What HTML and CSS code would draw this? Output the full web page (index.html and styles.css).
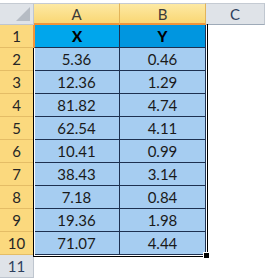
FILE: index.html
```html
<!DOCTYPE html>
<html>
<head>
<meta charset="utf-8">
<link rel="stylesheet" href="styles.css">
</head>
<body>
<div class="sheet">
  <div class="grid">
    <div class="corner"><span class="tri"></span></div>
    <div class="colh sel">A</div>
    <div class="colh sel">B</div>
    <div class="colh">C</div>

    <div class="rowh sel">1</div><div class="cell head a">X</div><div class="cell head b">Y</div><div class="empty"></div>
    <div class="rowh sel">2</div><div class="cell">5.36</div><div class="cell">0.46</div><div class="empty"></div>
    <div class="rowh sel">3</div><div class="cell">12.36</div><div class="cell">1.29</div><div class="empty"></div>
    <div class="rowh sel">4</div><div class="cell">81.82</div><div class="cell">4.74</div><div class="empty"></div>
    <div class="rowh sel">5</div><div class="cell">62.54</div><div class="cell">4.11</div><div class="empty"></div>
    <div class="rowh sel">6</div><div class="cell">10.41</div><div class="cell">0.99</div><div class="empty"></div>
    <div class="rowh sel">7</div><div class="cell">38.43</div><div class="cell">3.14</div><div class="empty"></div>
    <div class="rowh sel">8</div><div class="cell">7.18</div><div class="cell">0.84</div><div class="empty"></div>
    <div class="rowh sel">9</div><div class="cell">19.36</div><div class="cell">1.98</div><div class="empty"></div>
    <div class="rowh sel">10</div><div class="cell">71.07</div><div class="cell">4.44</div><div class="empty"></div>
    <div class="rowh">11</div><div class="empty"></div><div class="empty"></div><div class="empty"></div>
  </div>
  <div class="selection"><span class="handle"></span></div>
</div>
</body>
</html>
```
FILE: styles.css
```css
html, body {
  margin: 0;
  padding: 0;
  background: #ffffff;
}
.sheet {
  position: relative;
  width: 265px;
  height: 280px;
  overflow: hidden;
  padding-top: 3px;
  box-sizing: border-box;
  font-family: Lato, "Liberation Sans", sans-serif;
  font-size: 15px;
}
.grid {
  display: grid;
  grid-template-columns: 34px 86px 86px 59px;
  grid-template-rows: 22px repeat(11, 23px);
}
.grid > div {
  box-sizing: border-box;
  display: flex;
  align-items: center;
  justify-content: center;
}
.corner {
  background: #dfe3e8;
  border-top: 1px solid #c5cbd3;
  border-right: 1px solid #bfc6cf;
  border-bottom: 1px solid #bfc6cf;
  position: relative;
}
.tri {
  position: absolute;
  right: 3px;
  bottom: 3px;
  width: 0;
  height: 0;
  border-left: 14px solid transparent;
  border-bottom: 14px solid #b6bcc4;
}
.colh {
  background: #dfe3e8;
  border-top: 1px solid #c5cbd3;
  border-right: 1px solid #c0c7d0;
  border-bottom: 1px solid #9eaab8;
  color: #2e3f5e;
}
.colh.sel {
  background: linear-gradient(#fde9a4, #f9d774);
  border-right: 1px solid #e2b45a;
  border-bottom: 2px solid #f0943a;
  color: #3a3a3a;
}
.rowh {
  background: #dfe3e8;
  border-right: 1px solid #bfc6cf;
  border-bottom: 1px solid #bfc6cf;
  color: #2e3f5e;
}
.rowh.sel {
  background: #fbd97e;
  border-right: 1px solid #f0943a;
  border-bottom: 1px solid #e4bd66;
  color: #262626;
}
.cell {
  background: #a6cdf1;
  border-right: 1px solid #1d3050;
  border-bottom: 1px solid #1d3050;
  color: #1a1a1a;
}
.cell.head {
  font-weight: 900;
  color: #000;
}
.cell.head.a {
  background: #00a6ec;
  border-left: 1px solid #f0943a;
}
.cell.head.b {
  background: #0096e0;
}
.empty {
  background: #ffffff;
}
.selection {
  position: absolute;
  left: 33px;
  top: 48px;
  width: 175px;
  height: 209px;
  box-sizing: border-box;
  border: 1px solid #000;
  border-top: none;
  box-shadow: inset 1px 0 0 #fff, inset -1px 0 0 #fff, inset 0 -1px 0 #fff;
  pointer-events: none;
}
.selection::before {
  content: "";
  position: absolute;
  right: -1px;
  top: -24px;
  height: 24px;
  width: 1px;
  background: #000;
}
.handle {
  position: absolute;
  right: -3px;
  bottom: -3px;
  width: 5px;
  height: 5px;
  background: #000;
  border: 1px solid #fff;
}
```
